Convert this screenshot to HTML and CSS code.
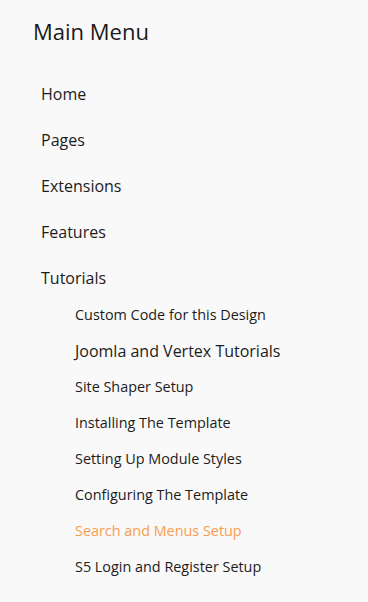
FILE: index.html
```html
<!DOCTYPE html>
<html>
<head>
<meta charset="utf-8">
<link rel="stylesheet" href="styles.css">
</head>
<body>
<div class="module">
  <h3 class="module-title">Main Menu</h3>
  <ul class="menu">
    <li class="item"><a class="top-link" href="#">Home</a></li>
    <li class="item"><a class="top-link" href="#">Pages</a></li>
    <li class="item"><a class="top-link" href="#">Extensions</a></li>
    <li class="item"><a class="top-link" href="#">Features</a></li>
    <li class="item"><a class="top-link" href="#">Tutorials</a>
      <ul class="submenu">
        <li><a class="sub-link" href="#">Custom Code for this Design</a></li>
        <li><a class="sub-link big" href="#">Joomla and Vertex Tutorials</a></li>
        <li><a class="sub-link" href="#">Site Shaper Setup</a></li>
        <li><a class="sub-link" href="#">Installing The Template</a></li>
        <li><a class="sub-link" href="#">Setting Up Module Styles</a></li>
        <li><a class="sub-link" href="#">Configuring The Template</a></li>
        <li><a class="sub-link active" href="#">Search and Menus Setup</a></li>
        <li><a class="sub-link" href="#">S5 Login and Register Setup</a></li>
      </ul>
    </li>
  </ul>
</div>
</body>
</html>
```

FILE: styles.css
```css
html, body {
  margin: 0;
  padding: 0;
  background: #f9f9f9;
}
body {
  font-family: "Open Sans", "Liberation Sans", sans-serif;
  color: #1c1c1c;
}
.module {
  padding: 16px 0 0 33px;
}
.module-title {
  margin: 0;
  font-size: 22px;
  font-weight: 400;
  line-height: 30px;
  color: #1a1a1a;
}
.menu {
  list-style: none;
  margin: 30px 0 0 0;
  padding: 0 0 0 8px;
}
.item + .item {
  margin-top: 10px;
}
.top-link {
  display: block;
  font-size: 16px;
  line-height: 36px;
  color: #1c1c1c;
  text-decoration: none;
}
.submenu {
  list-style: none;
  margin: 1px 0 0 0;
  padding: 0 0 0 34px;
}
.sub-link {
  display: block;
  font-size: 14.4px;
  line-height: 36px;
  color: #1c1c1c;
  text-decoration: none;
}
.sub-link.big {
  font-size: 16px;
}
.sub-link.active {
  color: #f89c50;
}
```
